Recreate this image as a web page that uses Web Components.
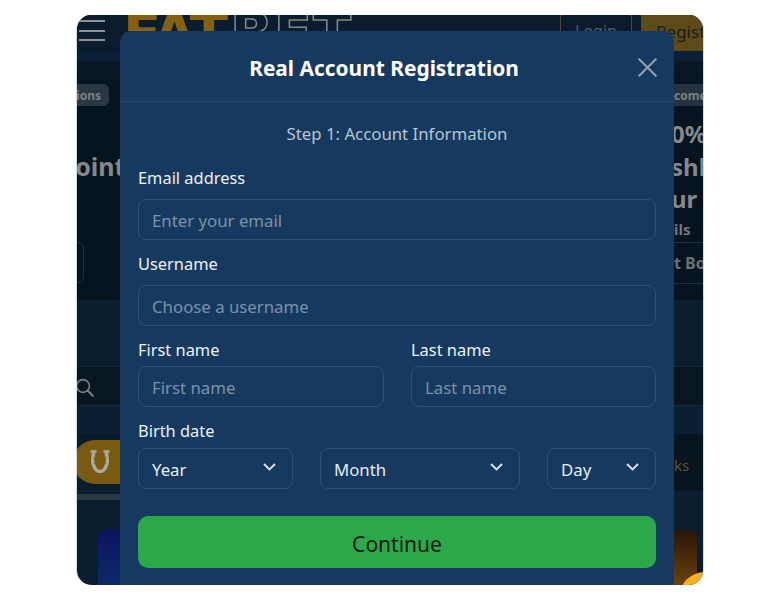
<!DOCTYPE html>
<html lang="en">
<head>
<meta charset="utf-8">
<title>Real Account Registration</title>
<style>
    html, body { margin: 0; background: #fff; }
    body { font-family: "Noto Sans", "Open Sans", sans-serif; }
</style>
</head>
<body>
<phone-frame>
    <site-backdrop></site-backdrop>
    <register-modal slot="overlay" heading="Real Account Registration" step="Step 1: Account Information">
        <form-field label="Email address"><text-input placeholder="Enter your email"></text-input></form-field>
        <form-field label="Username"><text-input placeholder="Choose a username"></text-input></form-field>
        <form-row>
            <form-field label="First name" tight><text-input placeholder="First name"></text-input></form-field>
            <form-field label="Last name" tight><text-input placeholder="Last name"></text-input></form-field>
        </form-row>
        <form-field label="Birth date" tight>
            <date-row>
                <date-select value="Year"></date-select>
                <date-select value="Month"></date-select>
                <date-select value="Day"></date-select>
            </date-row>
        </form-field>
        <green-button slot="footer">Continue</green-button>
    </register-modal>
</phone-frame>

<script>
    // The white page with the rounded phone view in it
    class PhoneFrame extends HTMLElement {
        constructor() {
            super();
            this.attachShadow({ mode: 'open' });
            this.shadowRoot.innerHTML = `
            <style>
                :host {
                    display: block;
                    position: relative;
                    box-sizing: border-box;
                    width: 628px;
                    height: 570px;
                    margin: 15px 0 0 76px;
                    border-left: 1px solid #d3d9df;
                    border-right: 1px solid #d3d9df;
                    border-radius: 15px;
                    overflow: hidden;
                }
            </style>
            <slot></slot>
            <slot name="overlay"></slot>
            `;
        }
    }

    // The dimmed site behind the modal, only its edges are visible
    class SiteBackdrop extends HTMLElement {
        constructor() {
            super();
            this.attachShadow({ mode: 'open' });
            this.shadowRoot.innerHTML = `
            <style>
                :host {
                    display: flex;
                    flex-direction: column;
                    height: 570px;
                    background: #0a1e30;
                    color: #7c8185;
                    font-family: "Noto Sans", "Open Sans", sans-serif;
                    overflow: hidden;
                }
                header { display: flex; height: 36px; background: #0a1c2e; flex: none; }
                .burger { width: 26px; padding: 5px 0 0 2px; display: flex; flex-direction: column; gap: 7.5px; }
                .burger i { display: block; height: 2px; background: #8d9296; }
                /* only the top of the logo shows above the modal */
                .logo {
                    margin-left: 18px;
                    width: 434px;
                    height: 16px;
                    overflow: hidden;
                    font: 900 56px/36px "DejaVu Sans", sans-serif;
                    letter-spacing: -2px;
                    white-space: nowrap;
                    color: #85610f;
                }
                .logo span {
                    margin-left: 4px;
                    letter-spacing: 1px;
                    color: transparent;
                    -webkit-text-stroke: 1.5px #85898a;
                }
                .login {
                    box-sizing: border-box;
                    width: 72px;
                    margin-left: 3px;
                    border-left: 1px solid #4b4a36;
                    border-right: 1px solid #4b4a36;
                    text-align: center;
                    font-size: 16px;
                    line-height: 32px;
                    color: #4f5c66;
                }
                .register {
                    margin-left: 9px;
                    flex: 1;
                    padding-left: 15px;
                    background: #5d4a19;
                    color: #1a1c18;
                    font-size: 17px;
                    line-height: 34px;
                    overflow: hidden;
                }
                .strip { height: 10px; background: #0b2036; flex: none; }
                .hero {
                    flex: none;
                    height: 239px;
                    display: flex;
                    justify-content: space-between;
                    background: linear-gradient(#0a1826, #06141f 12%);
                    font-weight: 700;
                    white-space: nowrap;
                }
                .hero > div { overflow: hidden; display: flex; flex-direction: column; }
                .left { width: 44px; align-items: flex-end; }
                .right { width: 29px; }
                .pill { margin-top: 23px; height: 22px; background: #2a3744; font-size: 12px; line-height: 24px; flex: none; }
                .left .pill { margin-right: 12px; padding: 0 8px 0 10px; border-radius: 6px; }
                .right .pill { background: #253340; margin-bottom: 12px; }
                .pts { margin: 42px -17px 0 0; font-size: 25px; line-height: 36px; color: #85898c; }
                .outline {
                    box-sizing: border-box;
                    width: 60px;
                    height: 41px;
                    margin: 58px 37px 0 0;
                    border: 1px solid #23303c;
                    border-radius: 6px;
                    flex: none;
                }
                .big { margin-left: -3px; font-size: 24px; line-height: 32.5px; color: #85898c; }
                .details { font-size: 15px; line-height: 26px; color: #73787c; }
                .bonus {
                    box-sizing: border-box;
                    height: 42px;
                    border-top: 1px solid #23303c;
                    border-bottom: 1px solid #23303c;
                    font-size: 16px;
                    line-height: 41px;
                    color: #6c7175;
                    flex: none;
                }
                .band { flex: none; height: 66px; background: #0a1e30; }
                .search {
                    flex: none;
                    height: 40px;
                    background: #07161f;
                    border-top: 1px solid #13283a;
                    border-bottom: 1px solid #13283a;
                    box-sizing: border-box;
                }
                .search svg { display: block; margin: 11px 0 0 -2px; }
                .gap { flex: none; height: 28px; background: #0b1f32; }
                .tabs { flex: none; height: 57px; display: flex; justify-content: space-between; background: #0a1e30; }
                .tab-left { width: 44px; padding-top: 6px; background: linear-gradient(#091a29, #0a1e30); }
                .shoe {
                    height: 44px;
                    margin-left: -4px;
                    padding-left: 16px;
                    display: flex;
                    align-items: center;
                    background: #7a5a10;
                    border-radius: 22px 0 0 22px;
                }
                .tab-right {
                    width: 29px;
                    background: #07151f;
                    color: #5e5234;
                    font-size: 15px;
                    line-height: 62px;
                }
                .rest { flex: 1; position: relative; display: flex; justify-content: space-between; }
                .rest-left { width: 44px; }
                .bar { height: 6px; margin-top: 3px; background: #2a3844; }
                .tile-l {
                    width: 23px;
                    height: 60px;
                    margin: 30px 0 0 21px;
                    border-radius: 6px 0 0 0;
                    background: linear-gradient(#0a1560, #0c2a6a);
                }
                .tile-r {
                    width: 23px;
                    height: 55px;
                    margin: 39px 6px 0 0;
                    border-radius: 0 6px 0 0;
                    background: linear-gradient(#2a1408, #6a4210);
                }
                .coin {
                    position: absolute;
                    right: -28px;
                    bottom: -34px;
                    width: 52px;
                    height: 52px;
                    border-radius: 50%;
                    background: #f5b01c;
                }
            </style>
            <header>
                <div class="burger"><i></i><i></i><i></i></div>
                <div class="logo">FAT<span>BET</span></div>
                <div class="login">Login</div>
                <div class="register">Register</div>
            </header>
            <div class="strip"></div>
            <section class="hero">
                <div class="left">
                    <div class="pill">Promotions</div>
                    <div class="pts">Points</div>
                    <div class="outline"></div>
                </div>
                <div class="right">
                    <div class="pill">come</div>
                    <div class="big">0%</div>
                    <div class="big">shl</div>
                    <div class="big">ur</div>
                    <div class="details">ils</div>
                    <div class="bonus">t Bo</div>
                </div>
            </section>
            <div class="band"></div>
            <div class="search">
                <svg width="20" height="20" viewBox="0 0 20 20" fill="none" stroke="#7b8084" stroke-width="1.6" stroke-linecap="round">
                    <circle cx="8" cy="8" r="6.4"/>
                    <path d="M12.8 12.8l5 5" stroke-width="2"/>
                </svg>
            </div>
            <div class="gap"></div>
            <div class="tabs">
                <div class="tab-left">
                    <div class="shoe">
                        <svg width="22" height="24" viewBox="0 0 22 24" fill="none" stroke="#a9aaa6" stroke-width="3.4">
                            <path d="M5 2c-1.500 5.500-2 9-.8 12.500C5.300 18 7.800 21.500 11 21.500s5.700-3.500 6.800-7C19 11 18.500 7.500 17 2"/>
                            <path d="M1.500 1.500h6M14.500 1.500h6" stroke-width="2.400"/>
                            <path d="M4.500 8v.1M5.500 13v.1M8.500 18v.1M13.500 18v.1M16.500 13v.1M17.500 8v.1" stroke="#6d6a5c" stroke-width="1.200" stroke-linecap="round"/>
                        </svg>
                    </div>
                </div>
                <div class="tab-right">ks</div>
            </div>
            <div class="rest">
                <div class="rest-left">
                    <div class="bar"></div>
                    <div class="tile-l"></div>
                </div>
                <div class="tile-r"></div>
                <div class="coin"></div>
            </div>
            `;
        }
    }

    // Modal sits over the site so it is the one thing placed absolutely
    class RegisterModal extends HTMLElement {
        constructor() {
            super();
            this.attachShadow({ mode: 'open' });
            this.shadowRoot.innerHTML = `
            <style>
                :host {
                    position: absolute;
                    top: 16px;
                    left: 43px;
                    width: 554px;
                    height: 570px;
                    background: #163a5f;
                    border-radius: 11px 11px 0 0;
                    color: #fff;
                    font-family: "Noto Sans", "Open Sans", sans-serif;
                }
                header {
                    display: flex;
                    align-items: center;
                    box-sizing: border-box;
                    height: 71px;
                    padding: 3px 17px 0 18px;
                    border-bottom: 1px solid #28496e;
                }
                h1 { flex: 1; margin: 0; font-size: 20.9px; font-weight: 700; text-align: center; }
                button { display: flex; width: 27px; justify-content: flex-end; padding: 0; border: 0; background: none; }
                .step { margin: 20px 0 21px; text-align: center; font-size: 16.8px; line-height: 24px; color: #b8c4d1; }
                .fields { display: flex; flex-direction: column; gap: 13px; padding: 0 18px; }
                .footer { padding: 27px 18px 0; }
            </style>
            <header>
                <h1></h1>
                <button type="button" aria-label="Close">
                    <svg width="19" height="19" viewBox="0 0 19 19" fill="none" stroke="#8ea2b7" stroke-width="2">
                        <path d="M.7.7l17.600 17.600M18.300.7L.7 18.300"/>
                    </svg>
                </button>
            </header>
            <div class="step"></div>
            <div class="fields"><slot></slot></div>
            <div class="footer"><slot name="footer"></slot></div>
            `;
        }

        connectedCallback() {
            this.shadowRoot.querySelector('h1').textContent = this.getAttribute('heading');
            this.shadowRoot.querySelector('.step').textContent = this.getAttribute('step');
        }
    }

    class FormField extends HTMLElement {
        constructor() {
            super();
            this.attachShadow({ mode: 'open' });
            this.shadowRoot.innerHTML = `
            <style>
                :host { display: flex; flex-direction: column; gap: 10px; min-width: 0; }
                :host([tight]) { gap: 5px; }
                label { font-size: 16.4px; line-height: 22px; color: #eef2f6; }
            </style>
            <label></label>
            <slot></slot>
            `;
        }

        connectedCallback() {
            this.shadowRoot.querySelector('label').textContent = this.getAttribute('label');
        }
    }

    class FormRow extends HTMLElement {
        constructor() {
            super();
            this.attachShadow({ mode: 'open' });
            this.shadowRoot.innerHTML = `
            <style>
                :host { display: grid; grid-template-columns: 246px 245px; column-gap: 27px; }
            </style>
            <slot></slot>
            `;
        }
    }

    class TextInput extends HTMLElement {
        constructor() {
            super();
            this.attachShadow({ mode: 'open' });
            this.shadowRoot.innerHTML = `
            <style>
                :host { display: block; }
                input {
                    display: block;
                    box-sizing: border-box;
                    width: 100%;
                    height: 41px;
                    padding: 2px 13px 0;
                    border: 1px solid #2d5078;
                    border-radius: 8px;
                    background: transparent;
                    outline: none;
                    color: #fff;
                    font: 16.8px "Noto Sans", "Open Sans", sans-serif;
                }
                input::placeholder { color: #7d90a6; opacity: 1; }
            </style>
            <input type="text">
            `;
        }

        connectedCallback() {
            this.shadowRoot.querySelector('input').placeholder = this.getAttribute('placeholder');
        }
    }

    class DateRow extends HTMLElement {
        constructor() {
            super();
            this.attachShadow({ mode: 'open' });
            this.shadowRoot.innerHTML = `
            <style>
                :host { display: grid; grid-template-columns: 155px 200px 109px; column-gap: 27px; margin-top: 1px; }
            </style>
            <slot></slot>
            `;
        }
    }

    class DateSelect extends HTMLElement {
        constructor() {
            super();
            this.attachShadow({ mode: 'open' });
            this.shadowRoot.innerHTML = `
            <style>
                :host {
                    display: flex;
                    align-items: center;
                    justify-content: space-between;
                    box-sizing: border-box;
                    height: 41px;
                    padding: 2px 16px 0 13px;
                    border: 1px solid #2d5078;
                    border-radius: 8px;
                    font-size: 16.8px;
                    color: #e6ebf0;
                }
                svg { margin-top: -5px; }
            </style>
            <span></span>
            <svg width="13" height="8" viewBox="0 0 13 8" fill="none" stroke="#dfe5eb" stroke-width="1.8">
                <path d="M1 1l5.500 5.500L12 1"/>
            </svg>
            `;
        }

        connectedCallback() {
            this.shadowRoot.querySelector('span').textContent = this.getAttribute('value');
        }
    }

    class GreenButton extends HTMLElement {
        constructor() {
            super();
            this.attachShadow({ mode: 'open' });
            this.shadowRoot.innerHTML = `
            <style>
                :host { display: block; }
                button {
                    display: block;
                    width: 100%;
                    height: 52px;
                    padding: 3px 0 0;
                    border: 0;
                    border-radius: 10px;
                    background: #2ba84a;
                    color: #0c1a12;
                    font: 21px "Noto Sans", "Open Sans", sans-serif;
                }
            </style>
            <button type="button"><slot></slot></button>
            `;
        }
    }

    customElements.define('phone-frame', PhoneFrame);
    customElements.define('site-backdrop', SiteBackdrop);
    customElements.define('register-modal', RegisterModal);
    customElements.define('form-field', FormField);
    customElements.define('form-row', FormRow);
    customElements.define('text-input', TextInput);
    customElements.define('date-row', DateRow);
    customElements.define('date-select', DateSelect);
    customElements.define('green-button', GreenButton);
</script>
</body>
</html>
